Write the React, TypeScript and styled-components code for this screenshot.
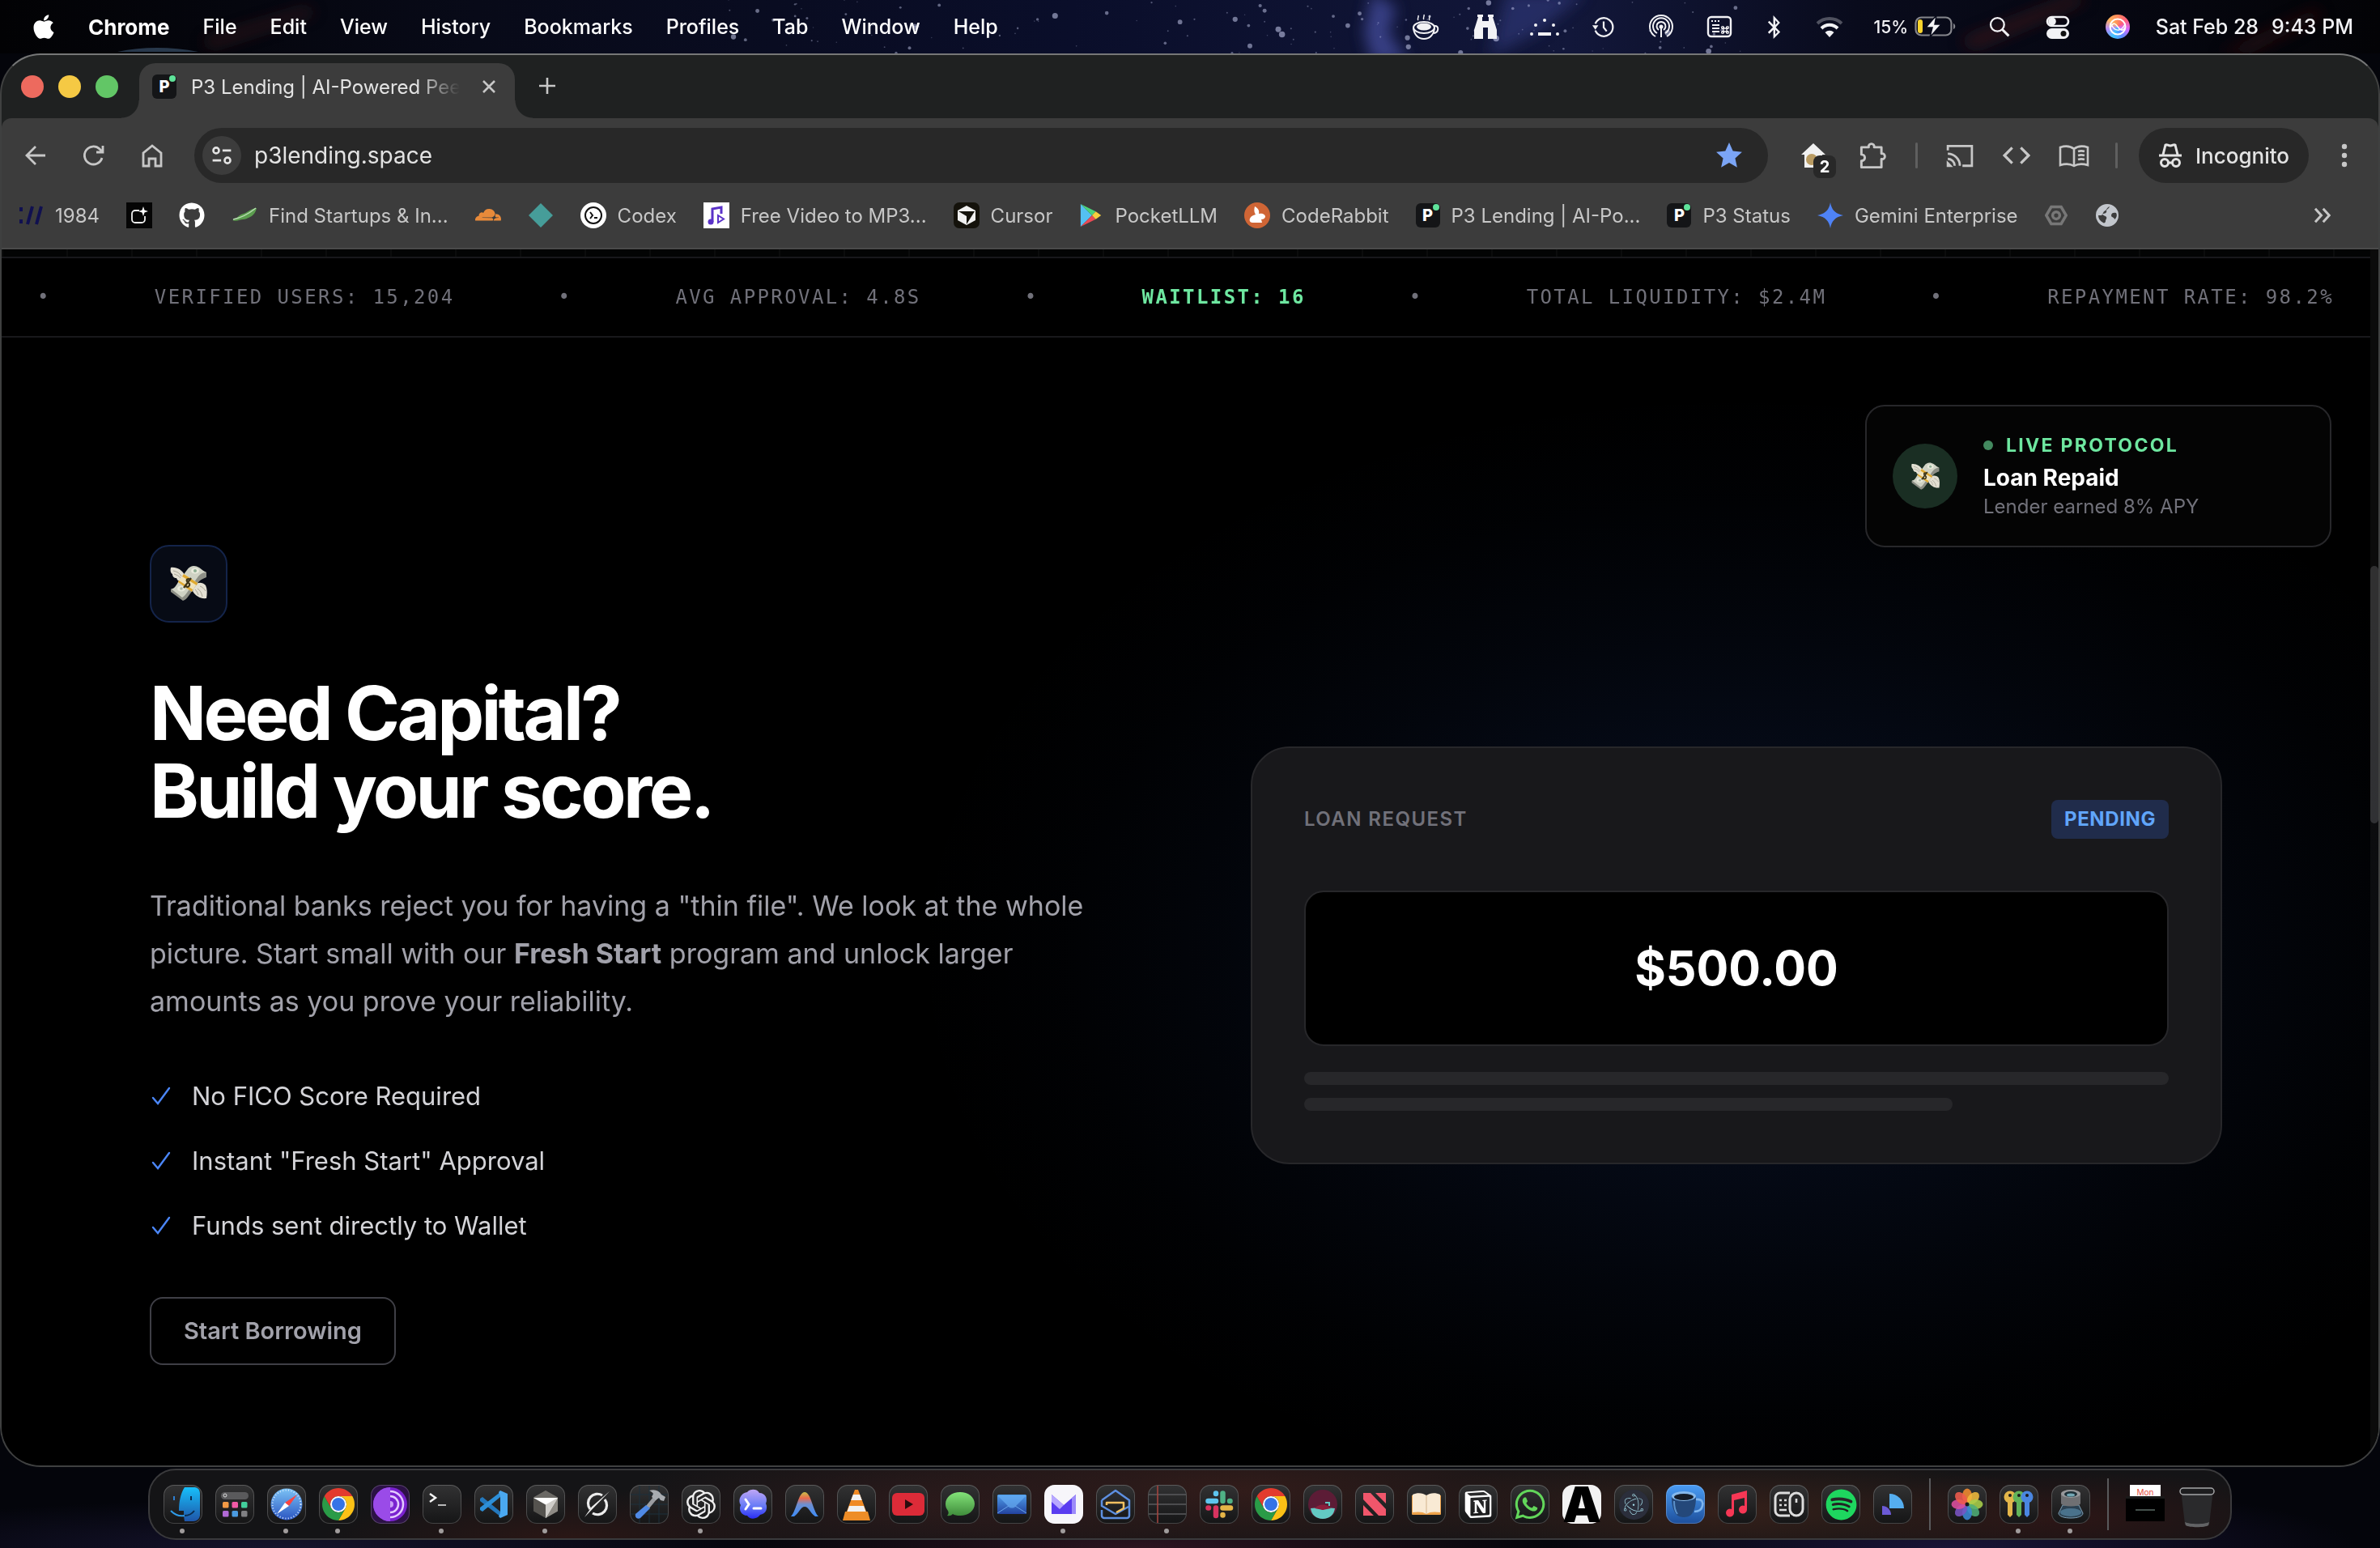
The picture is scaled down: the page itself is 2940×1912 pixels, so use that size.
import React from "react";
import styled, { createGlobalStyle, css } from "styled-components";
import { FaApple, FaGithub, FaSpotify, FaWhatsapp, FaCloudflare, FaBluetoothB } from "react-icons/fa6";
import { SiOpenai, SiNotion, SiElectron } from "react-icons/si";

/* ------------------------------------------------------------------ base */

const sans = `Inter, "Liberation Sans", sans-serif`;
const mono = `"DejaVu Sans Mono", "Liberation Mono", monospace`;

const GlobalStyle = createGlobalStyle`
  *, *::before, *::after { box-sizing: border-box; }
  html, body { margin: 0; background: #04050c; }
  body { font-family: ${sans}; color: #fff; overflow: hidden; }
  button, input { font: inherit; color: inherit; }
  button { cursor: pointer; border: 0; padding: 0; background: none; }
  a { color: inherit; text-decoration: none; }
  h1, p, ul, ol { margin: 0; padding: 0; }
  ul, ol { list-style: none; }
  svg { display: block; flex: none; }
`;

const Desktop = styled.div`
  position: relative;
  isolation: isolate;
  display: flex;
  flex-direction: column;
  min-height: 100vh;
  padding-bottom: 10px;
  background:
    radial-gradient(600px 60px at 12% 100%, #15132c 0%, transparent 100%),
    radial-gradient(500px 60px at 48% 100%, #2c1420 0%, transparent 100%),
    radial-gradient(500px 80px at 82% 100%, #191436 0%, transparent 100%),
    #04050b;
`;

const StarField = styled.svg`
  position: absolute;
  top: 0;
  left: 0;
  width: 100%;
  height: 66px;
  z-index: -1;
`;

/* -------------------------------------------------------------- menu bar */

const MenuBar = styled.header`
  display: flex;
  align-items: center;
  justify-content: space-between;
  height: 66px;
  padding: 0 33px 0 40px;
  font-size: 25px;
  font-weight: 500;
`;

const MenuList = styled.nav`
  display: flex;
  align-items: center;
  gap: 41px;
`;

const AppleMenu = styled.button`
  display: flex;
  justify-content: center;
  width: 28px;
`;

const MenuItem = styled.button<{ $strong?: boolean }>`
  font-size: ${(p) => (p.$strong ? 26 : 25)}px;
  font-weight: ${(p) => (p.$strong ? 700 : 500)};
`;

const StatusList = styled.div`
  display: flex;
  align-items: center;
  gap: 40px;
  color: #f2f2f5;
`;

const StatusCell = styled.button<{ $w: number }>`
  display: flex;
  justify-content: center;
  align-items: center;
  gap: 8px;
  width: ${(p) => p.$w}px;
  font-size: 21px;
  white-space: nowrap;
`;

const SiriOrb = styled.span`
  display: grid;
  place-items: center;
  width: 30px;
  height: 30px;
  border-radius: 50%;
  background: conic-gradient(#ff8a5c, #ff5f7a, #d66bff, #5f8bff, #3fc4ff, #b58cff, #ffb35c, #ff8a5c);
`;

const Clock = styled.time`
  display: flex;
  gap: 16px;
  margin-left: -9px;
  white-space: nowrap;
`;

/* ---------------------------------------------------------------- window */

const Window = styled.section`
  flex: 1;
  display: flex;
  flex-direction: column;
  overflow: hidden;
  border: 2px solid #3f4040;
  border-top-color: #767777;
  border-radius: 50px;
  background: #1f2121;
`;

const TabStrip = styled.div`
  display: flex;
  align-items: flex-end;
  height: 78px;
  padding-left: 24px;
`;

const Lights = styled.div`
  display: flex;
  gap: 18px;
  align-self: center;
`;

const Light = styled.button<{ $c: string }>`
  width: 28px;
  height: 28px;
  border-radius: 50%;
  background: ${(p) => p.$c};
`;

const foot = css`
  content: "";
  position: absolute;
  bottom: 0;
  width: 22px;
  height: 22px;
`;

const Tab = styled.div`
  position: relative;
  display: flex;
  align-items: center;
  gap: 18px;
  width: 464px;
  height: 68px;
  margin-left: 26px;
  padding: 0 14px 10px 16px;
  border-radius: 20px 20px 0 0;
  background: #3c3c3c;
  color: #e3e3e3;
  font-size: 24px;
  &::before { ${foot} left: -22px; background: radial-gradient(circle at 0 0, transparent 21px, #3c3c3c 22px); }
  &::after { ${foot} right: -22px; background: radial-gradient(circle at 100% 0, transparent 21px, #3c3c3c 22px); }
`;

const TabTitle = styled.span`
  flex: 1;
  overflow: hidden;
  white-space: nowrap;
  mask-image: linear-gradient(90deg, #000 84%, transparent 100%);
`;

const IconButton = styled.button`
  display: grid;
  place-items: center;
  width: 36px;
  height: 36px;
  color: #c7c7c7;
`;

const NewTab = styled(IconButton)`
  margin: 0 0 22px 22px;
`;

const Chrome = styled.div`
  display: flex;
  flex-direction: column;
  border-radius: 12px 12px 0 0;
  background: #3c3c3c;
  border-bottom: 2px solid #4a4a4a;
`;

const Toolbar = styled.div`
  display: flex;
  align-items: center;
  gap: 36px;
  padding: 12px 24px 0 24px;
`;

const AddressBar = styled.form`
  flex: 1;
  display: flex;
  align-items: center;
  gap: 16px;
  height: 68px;
  margin: 0 2px 0 -2px;
  padding: 0 30px 0 10px;
  border-radius: 34px;
  background: #282828;
`;

const SiteInfo = styled.button`
  display: grid;
  place-items: center;
  width: 48px;
  height: 48px;
  border-radius: 50%;
  background: #3c3c3c;
  color: #e3e3e3;
`;

const UrlInput = styled.input`
  flex: 1;
  border: 0;
  outline: 0;
  padding: 0;
  background: none;
  color: #e3e3e3;
  font-size: 28px;
`;

const ExtensionButton = styled(IconButton)`
  position: relative;
  margin-right: 4px;
`;

const ExtensionCount = styled.span`
  position: absolute;
  left: 18px;
  top: 18px;
  width: 28px;
  height: 28px;
  border-radius: 8px;
  background: #282828;
  color: #fff;
  font-size: 20px;
  font-weight: 700;
  line-height: 28px;
`;

const Divider = styled.span`
  width: 3px;
  height: 32px;
  border-radius: 2px;
  background: #5f5f5f;
`;

const ToolGroup = styled.div`
  display: flex;
  align-items: center;
  gap: 34px;
`;

const Incognito = styled.button`
  display: flex;
  align-items: center;
  gap: 16px;
  height: 68px;
  padding: 0 24px;
  margin: 0 -8px;
  border-radius: 34px;
  background: #282828;
  color: #e3e3e3;
  font-size: 26px;
  font-weight: 500;
`;

const Bookmarks = styled.nav`
  display: flex;
  align-items: center;
  gap: 33px;
  height: 80px;
  padding: 0 51px 0 20px;
  color: #c7c7c7;
  font-size: 24px;
`;

const Bookmark = styled.a`
  display: flex;
  align-items: center;
  gap: 14px;
  white-space: nowrap;
`;

const MoreBookmarks = styled(IconButton)`
  margin-left: auto;
`;

const P3Tile = styled.span`
  position: relative;
  display: grid;
  place-items: center;
  width: 30px;
  height: 30px;
  border-radius: 6px;
  background: #141517;
  color: #fff;
  font-size: 20px;
  font-weight: 800;
  line-height: 30px;
  &::after {
    content: "";
    position: absolute;
    top: 1px;
    right: 1px;
    width: 8px;
    height: 8px;
    border-radius: 50%;
    background: #5fe39a;
  }
`;

/* ------------------------------------------------------------------ page */

const Viewport = styled.div`
  flex: 1;
  display: grid;
  grid-template-columns: 1fr 10px;
  background: #000;
`;

const Page = styled.main`
  position: relative;
  isolation: isolate;
  min-width: 0;
`;

const GridSliver = styled.div`
  height: 9px;
  background: repeating-linear-gradient(90deg, #0b0c0c 0 2px, #030404 2px 80px);
`;

const Ticker = styled.div`
  display: flex;
  align-items: center;
  gap: 128px;
  height: 100px;
  padding-left: 44px;
  overflow: hidden;
  border: solid #18181b;
  border-width: 2px 0;
  color: #71717a;
  font-family: ${mono};
  font-size: 24px;
  letter-spacing: 2.4px;
  white-space: nowrap;
`;

const TickerValue = styled.span<{ $live?: boolean }>`
  ${(p) => p.$live && css`color: #6ee7a0; font-weight: 700;`}
`;

const Hero = styled.section`
  display: grid;
  grid-template-columns: 1fr 1fr;
  align-items: center;
  gap: 160px;
  max-width: 2560px;
  margin: 0 auto;
  padding: 256px 0 120px;
`;

const Pitch = styled.div`
  display: flex;
  flex-direction: column;
  align-items: flex-start;
  gap: 64px;
`;

const PitchIcon = styled.div`
  display: grid;
  place-items: center;
  width: 96px;
  height: 96px;
  border: 2px solid #14244a;
  border-radius: 24px;
  background: #070b15;
`;

const Title = styled.h1`
  font-size: 92px;
  font-weight: 700;
  line-height: 96px;
  letter-spacing: -0.04em;
`;

const Lead = styled.p`
  color: #a1a1aa;
  font-size: 34px;
  line-height: 59px;
`;

const Perks = styled.ul`
  display: flex;
  flex-direction: column;
  gap: 32px;
`;

const Perk = styled.li`
  display: flex;
  align-items: center;
  gap: 24px;
  color: #d4d4d8;
  font-size: 31px;
  line-height: 48px;
`;

const StartButton = styled.button`
  padding: 20px 40px;
  border: 2px solid #3f3f46;
  border-radius: 16px;
  color: #a1a1aa;
  font-size: 29px;
  font-weight: 600;
  line-height: 40px;
`;

const CardStage = styled.div`
  position: relative;
  &::before {
    content: "";
    position: absolute;
    z-index: -1;
    inset: -440px -420px;
    background: radial-gradient(closest-side, rgba(50, 100, 220, 0.13) 0%, rgba(50, 100, 220, 0.1) 35%, rgba(50, 100, 220, 0.05) 60%, rgba(50, 100, 220, 0.015) 82%, transparent 100%);
  }
`;

const LoanCard = styled.article`
  display: flex;
  flex-direction: column;
  padding: 64px;
  border: 2px solid #27272a;
  border-radius: 48px;
  background: #18181b;
`;

const LoanHead = styled.div`
  display: flex;
  align-items: center;
  justify-content: space-between;
  margin-bottom: 64px;
  color: #71717a;
  font-size: 24px;
  font-weight: 600;
  letter-spacing: 0.06em;
`;

const Badge = styled.span`
  padding: 8px 16px;
  border-radius: 8px;
  background: #202c4b;
  color: #60a5fa;
  font-weight: 700;
  line-height: 32px;
  letter-spacing: 0.025em;
`;

const Amount = styled.div`
  display: grid;
  place-items: center;
  height: 192px;
  margin-bottom: 32px;
  border: 2px solid #27272a;
  border-radius: 24px;
  background: #000;
  font-size: 59px;
  font-weight: 700;
`;

const Skeleton = styled.div<{ $short?: boolean }>`
  width: ${(p) => (p.$short ? "75%" : "100%")};
  height: 16px;
  border-radius: 8px;
  background: #27272a;
  & + & { margin-top: 16px; }
`;

const Toast = styled.aside`
  position: absolute;
  top: 192px;
  right: 48px;
  display: flex;
  align-items: center;
  gap: 32px;
  width: 576px;
  padding: 32px;
  border: 2px solid #27272a;
  border-radius: 24px;
  background: #040404;
`;

const ToastIcon = styled.div`
  display: grid;
  place-items: center;
  width: 80px;
  height: 80px;
  border-radius: 50%;
  background: #1a2e23;
`;

const ToastText = styled.div`
  display: flex;
  flex-direction: column;
  color: #71717a;
  font-size: 24px;
  line-height: 32px;
`;

const LiveLabel = styled.div`
  display: flex;
  align-items: center;
  gap: 16px;
  margin-bottom: 4px;
  color: #6ee7a0;
  font-size: 23px;
  font-weight: 700;
  letter-spacing: 0.1em;
  &::before {
    content: "";
    width: 12px;
    height: 12px;
    border-radius: 50%;
    background: #43895f;
  }
`;

const ToastTitle = styled.strong`
  color: #fff;
  font-size: 28px;
  font-weight: 700;
  line-height: 40px;
`;

const ScrollTrack = styled.div`
  display: grid;
  grid-template-rows: 391fr 318fr 793fr;
  background: #0b0b0b;
`;

const ScrollThumb = styled.div`
  grid-row: 2;
  border-radius: 6px;
  background: #303031;
`;

/* ------------------------------------------------------------------ dock */

const Dock = styled.nav`
  align-self: center;
  display: flex;
  align-items: center;
  gap: 16px;
  height: 88px;
  margin-top: 2px;
  padding: 0 17px;
  border: 2px solid #3a3a3c;
  border-radius: 34px;
  background:
    radial-gradient(300px 60px at 20% 100%, #2a1716 0%, transparent 100%),
    radial-gradient(400px 80px at 38% 50%, #2b1a1b 0%, transparent 100%),
    radial-gradient(500px 90px at 52% 30%, #321c1a 0%, transparent 100%),
    radial-gradient(420px 70px at 76% 60%, #35201a 0%, transparent 100%),
    radial-gradient(300px 60px at 92% 70%, #2c1616 0%, transparent 100%),
    #141416;
`;

const DockItem = styled.button<{ $running?: boolean; $bg?: string; $bare?: boolean }>`
  position: relative;
  display: grid;
  place-items: center;
  width: 48px;
  height: 48px;
  border-radius: 13px;
  ${(p) =>
    !p.$bare &&
    css`
      background: ${p.$bg ?? "linear-gradient(#323233, #151516)"};
      box-shadow: inset 0 0 0 1px rgba(255, 255, 255, 0.2);
    `}
  ${(p) =>
    p.$running &&
    css`
      &::after {
        content: "";
        position: absolute;
        left: 20px;
        top: 54px;
        width: 6px;
        height: 6px;
        border-radius: 50%;
        background: #a09c9c;
      }
    `}
`;

const DockDivider = styled.span`
  display: flex;
  justify-content: center;
  width: 12px;
  &::before {
    content: "";
    width: 2px;
    height: 64px;
    background: #59595b;
  }
`;

/* ----------------------------------------------------------------- icons */

type Draw = { children: React.ReactNode; w?: number; h?: number; box?: string };

const Draw48 = ({ children }: { children: React.ReactNode }) => (
  <svg width="48" height="48" viewBox="0 0 48 48" aria-hidden="true">{children}</svg>
);

const Line = ({ children, w = 32, h = 32, box = "0 0 32 32" }: Draw) => (
  <svg width={w} height={h} viewBox={box} fill="none" stroke="currentColor" strokeWidth="2.6" aria-hidden="true">
    {children}
  </svg>
);

const FlyingMoney = ({ size }: { size: number }) => (
  <svg width={size} height={size} viewBox="0 0 48 48" aria-label="Flying money" role="img">
    <path d="M2 4c7-1 14 3 17 9l-4 8c-3 0-5-1-6-4-3 0-5-2-5-5-2-1-3-4-2-8z" fill="#e3e0d3" />
    <path d="M5 8c5 1 8 3 10 7M6 12c3 1 6 2 8 5" stroke="#a8a596" fill="none" />
    <path d="M46 42c-7 1-14-3-17-9l3-8c4-3 9-3 13 1 2 4 2 10 1 16z" fill="#e3e0d3" />
    <path d="M41 40c-1-5-3-8-6-10M36 38c-1-3-2-5-4-7M45 33c-2-3-4-5-7-6" stroke="#a8a596" fill="none" />
    <path d="M2 31c4 1 6-3 9-8L22 8c4-6 10-6 15-3 4 3 7 4 9 5v6c-5 2-8 3-12 9L24 39c-2 3-4 5-7 6L2 34z" fill="#8d8f86" />
    <path d="M2 30c4 1 6-3 9-8L22 7c4-6 10-6 15-3 4 3 6 5 9 6-6 0-9 3-13 9L22 35c-2 3-4 5-6 6z" fill="#cfd2c4" />
    <ellipse cx="32" cy="8" rx="5" ry="3.6" fill="#e9eadc" />
    <circle cx="32" cy="8" r="2" fill="#8fae94" />
    <ellipse cx="15" cy="30" rx="5" ry="3.6" fill="#e9eadc" />
    <circle cx="15" cy="30" r="1.8" fill="#a9b8a8" />
    <path d="M18 12l17 11-7 11-17-12z" fill="#efe3bd" />
    <path d="M18 12l17 11-1 3-18-11zM12 20l17 11-1 3-17-12z" fill="#e0a92f" />
    <path d="M26 19c-3-2-5 0-4 2s4 2 3 5-4 2-6 0M27 17l-9 12" stroke="#3c3418" strokeWidth="2.2" fill="none" />
  </svg>
);

const ChromeLogo = () => {
  const blade = "M24 14 41.32 14A20 20 0 0 0 6.68 14L15.34 29A10 10 0 0 1 24 14Z";
  return (
    <Draw48>
      <path d={blade} fill="#fbc116" transform="rotate(120 24 24)" />
      <path d={blade} fill="#2a9b47" transform="rotate(240 24 24)" />
      <path d={blade} fill="#e33b2e" />
      <circle cx="24" cy="24" r="10" fill="#fff" />
      <circle cx="24" cy="24" r="8" fill="#3573e6" />
    </Draw48>
  );
};

const CursorCube = () => (
  <Draw48>
    <path d="M24 7 39 15.500V32.500L24 41 9 32.500V15.500Z" fill="#55534f" />
    <path d="M24 7 39 15.500 24 24 9 15.500Z" fill="#6b6965" />
    <path d="M39 15.500V32.500L24 41V24Z" fill="#8f8c86" />
    <path d="M9 16H39L24 41V24.500Z" fill="#fff" />
    <path d="M39 16 24 41V24.500Z" fill="#cfcdc9" />
  </Draw48>
);

const Vscode = () => (
  <Draw48>
    <path d="M7 17l3-2 22 18v6L7 20z" fill="#2478bd" />
    <path d="M7 31l3 2 22-18V9L7 28z" fill="#2d8fd8" />
    <path d="M32 7l9 4v26l-9 4-2-2 2-4V14l-2-5z" fill="#4aa8f0" />
  </Draw48>
);

const Finder = () => (
  <Draw48>
    <defs>
      <linearGradient id="finder" x2="0" y2="1"><stop stopColor="#17c0fb" /><stop offset="1" stopColor="#1f55a8" /></linearGradient>
    </defs>
    <path d="M26 3h13a7 7 0 0 1 6 7v28a8 8 0 0 1-8 7H26c-1-5-1-9-1-13h-6c0-11 2-21 7-29z" fill="url(#finder)" />
    <path d="M13 14v5" stroke="#2f7ed0" strokeWidth="2" />
    <path d="M34 14v5" stroke="#0b2c4e" strokeWidth="2" />
    <path d="M9 32c6 6 12 7 17 6" stroke="#2f9be8" strokeWidth="2" fill="none" />
    <path d="M26 38c5 0 9-2 12-6" stroke="#0b2c4e" strokeWidth="2" fill="none" />
  </Draw48>
);

const Launchpad = () => (
  <Draw48>
    <rect x="7" y="9" width="34" height="9" rx="4.500" fill="#5a5a5c" />
    <circle cx="12" cy="13" r="2" fill="none" stroke="#ddd" />
    {["#f39a45", "#f35aa6", "#42cf9c", "#b16ad6", "#4b9be0", "#808083"].map((c, i) => (
      <rect key={c} x={9 + (i % 3) * 11.500} y={i < 3 ? 21 : 32} width="7.500" height="7.500" rx="1.500" fill={c} />
    ))}
  </Draw48>
);

const Safari = () => (
  <Draw48>
    <defs>
      <linearGradient id="safari" x2="0" y2="1"><stop stopColor="#7cc3f5" /><stop offset="1" stopColor="#2b55c2" /></linearGradient>
    </defs>
    <circle cx="24" cy="24" r="19.500" fill="url(#safari)" />
    <circle cx="24" cy="24" r="17.500" fill="none" stroke="#d7eaff" strokeWidth="2" strokeDasharray="1 2.500" />
    <path d="M37 12 27 26 22 22Z" fill="#fb4340" />
    <path d="M12 36 27 26 22 22Z" fill="#fff" />
  </Draw48>
);

const Tor = () => (
  <Draw48>
    <circle cx="24" cy="24" r="21" fill="#7a22d0" />
    <path d="M24 3a21 21 0 0 0 0 42z" fill="#9a4be8" />
    <path d="M24 8a16 16 0 0 1 0 32M24 14a10 10 0 0 1 0 20" stroke="#e4cbff" strokeWidth="2.500" fill="none" />
    <path d="M24 20a4 4 0 0 1 0 8z" fill="#c79bf5" />
  </Draw48>
);

const Terminal = () => (
  <Draw48>
    <path d="M9 11l7 5-7 5" stroke="#f4f4f4" strokeWidth="2.500" fill="none" />
    <path d="M19 25h10" stroke="#b8b8b8" strokeWidth="2" />
  </Draw48>
);

const Grok = () => (
  <Draw48>
    <path d="M30 13a11.500 11.500 0 0 0-15 17M18 35a11.500 11.500 0 0 0 15-17" stroke="#ececec" strokeWidth="3.200" fill="none" />
    <path d="M39 8 8 40l9-13z" fill="#ececec" />
  </Draw48>
);

const Xcode = () => (
  <Draw48>
    <path d="M1 12h46M1 24h46M1 36h46M12 1v46M24 1v46M36 1v46" stroke="#1c303d" strokeWidth="1" />
    <path d="M29 15 33 18 24 29 20 26Z" fill="#9a9da1" />
    <path d="M20 25 25 29 13 41c-4 2-7-1-6-5z" fill="#4f8ae6" />
    <path d="M24 7c7-2 12 0 15 5l5 3-2 5-4-1-2-3-4 3-5-4 2-4c-1-2-3-3-5-4z" fill="#a9acb0" />
  </Draw48>
);

const Codex = () => (
  <Draw48>
    <defs>
      <linearGradient id="codex" x2="0" y2="1"><stop stopColor="#c0a6f5" /><stop offset=".55" stopColor="#6a7df7" /><stop offset="1" stopColor="#2a2df5" /></linearGradient>
    </defs>
    <path d="M17 9c4-5 13-4 15 1 7 0 11 7 8 13 3 6 0 13-7 14-4 6-13 6-16 1-7 0-11-7-8-13-4-6 0-15 8-16z" fill="url(#codex)" />
    <path d="M15 18l4 6-4 6M25 29h9" stroke="#fff" strokeWidth="3" fill="none" strokeLinecap="round" />
  </Draw48>
);

const RainbowArch = () => (
  <Draw48>
    <defs>
      <linearGradient id="arch" x2="0" y2="1"><stop stopColor="#c7c04a" /><stop offset=".25" stopColor="#ea6a4c" /><stop offset=".5" stopColor="#6f8fd0" /><stop offset="1" stopColor="#3e8cf7" /></linearGradient>
    </defs>
    <path d="M7 39C14 32 16 9 24 9s10 23 17 30h-4c-6-4-8-12-13-12s-7 8-13 12z" fill="url(#arch)" />
  </Draw48>
);

const Vlc = () => (
  <Draw48>
    <path d="M22 6h4l12 32H10z" fill="#f08a24" />
    <path d="M19.800 12h8.400l2.600 7H17.200zM15 26h18l2.500 7h-23z" fill="#f1f1f1" />
    <path d="M10 33h28l3 11H7z" fill="#ee8d27" />
  </Draw48>
);

const Youtube = () => (
  <Draw48>
    <rect x="4" y="10" width="40" height="28" rx="6" fill="#dc2b38" />
    <path d="M20 18l10 6-10 6z" fill="#2b0c0e" />
  </Draw48>
);

const Messages = () => (
  <Draw48>
    <defs>
      <linearGradient id="msg" x2="0" y2="1"><stop stopColor="#83e379" /><stop offset="1" stopColor="#3f8c3b" /></linearGradient>
    </defs>
    <path d="M24 9c10 0 18 6 18 14.500S34 38 24 38c-4 0-7-.6-9-2-2 2-4 2.500-7 2 2-2 2-4 1-6-2-2.500-3-5-3-8.500C6 15 14 9 24 9z" fill="url(#msg)" />
  </Draw48>
);

const Mail = () => (
  <Draw48>
    <defs>
      <linearGradient id="mail" x2="0" y2="1"><stop stopColor="#4f9eea" /><stop offset="1" stopColor="#2343a0" /></linearGradient>
    </defs>
    <rect x="6" y="12" width="36" height="24" rx="1.500" fill="url(#mail)" />
    <path d="M6 13h36L28 27c-2 2-6 2-8 0z" fill="#67adf2" opacity=".7" />
    <path d="M6 35l14-9M42 35l-14-9" stroke="#6ba6ea" strokeWidth="1" fill="none" />
  </Draw48>
);

const Proton = () => (
  <Draw48>
    <path d="M9 12l15 13 15-13v24H9z" fill="#5a3df0" />
    <path d="M9 12l15 13-5 5-10-9z" fill="#b8a8ff" />
    <path d="M34 16l5-4v24h-5z" fill="#9d8bfa" />
  </Draw48>
);

const HomeMail = () => (
  <Draw48>
    <path d="M7 19 24 7 41 19V38a3 3 0 0 1-3 3H10a3 3 0 0 1-3-3V31M7 19v7l17 10 16-9" stroke="#5d8fe0" strokeWidth="2.500" fill="none" strokeLinejoin="round" />
    <path d="M13 25v-3h21v7l-9 5" stroke="#f2c061" strokeWidth="2.500" fill="none" strokeLinejoin="round" />
  </Draw48>
);

const Lined = () => (
  <Draw48>
    <path d="M1 12h46M1 24h46M1 36h46" stroke="#5a5a5c" strokeWidth="1.600" />
    <path d="M12 1v46" stroke="#a3443f" strokeWidth="1.600" />
  </Draw48>
);

const SlackMark = () => (
  <Draw48>
    <g strokeWidth="6.500" strokeLinecap="round">
      <path d="M10.500 20H20" stroke="#5ec5ee" />
      <path d="M20 10.500V11" stroke="#5ec5ee" />
      <path d="M28.500 10.500V20" stroke="#4fb185" />
      <path d="M37 20h.5" stroke="#4fb185" />
      <path d="M28.500 28.500H38" stroke="#e6b547" />
      <path d="M28.500 37v.5" stroke="#e6b547" />
      <path d="M20 28.500V38" stroke="#d8335f" />
      <path d="M10.500 28.500H11" stroke="#d8335f" />
    </g>
  </Draw48>
);

const Bowl = () => (
  <Draw48>
    <circle cx="24" cy="24" r="18" fill="#5c1c36" />
    <path d="M9 29c5-1 11-1 15 2 4-3 10-3 15-2-1 8-7 13-15 13S10 37 9 29z" fill="#63c9c3" />
    <path d="M14 29c5-6 15-6 20 0l-10 2z" fill="#8c1f3c" />
    <path d="M27 22h5v4" stroke="#63c9c3" strokeWidth="2" fill="none" />
  </Draw48>
);

const News = () => (
  <Draw48>
    <path d="M10 10h9l19 20v8h-9L10 18zM25 10h13v13zM10 25v13h13z" fill="#f0566b" />
  </Draw48>
);

const Books = () => (
  <Draw48>
    <path d="M6 13h36v23a1 1 0 0 1-1 1H7a1 1 0 0 1-1-1z" fill="#eda24a" />
    <path d="M7 12c6-3 13-2 17 1 4-3 11-4 17-1v22c-6-1-13-1-17 2-4-3-11-3-17-2z" fill="#f9ead4" />
    <path d="M24 13v23" stroke="#d8bd98" strokeWidth="1.200" />
  </Draw48>
);

const LetterA = styled.span`
  font-size: 60px;
  font-weight: 900;
  line-height: 48px;
  color: #000;
`;

const Disc = styled.span`
  display: grid;
  place-items: center;
  width: 37px;
  height: 37px;
  border-radius: 50%;
  background: #2b2e3b;
`;

const Mug = () => (
  <Draw48>
    <path d="M37 18c8-1 9 4 8 8-1 5-5 7-10 7" stroke="#7db4ee" strokeWidth="2.600" fill="none" />
    <path d="M7 14c0 9 1 17 6 23 4 4 14 4 18 0 5-6 6-14 6-23z" fill="#24487a" />
    <ellipse cx="22" cy="14" rx="15" ry="6" fill="#86b9ec" />
    <ellipse cx="22" cy="15" rx="12" ry="4" fill="#151d29" />
    <path d="M10 20c0 7 1 12 4 16" stroke="#5c92cc" strokeWidth="2" fill="none" />
  </Draw48>
);

const Music = () => (
  <Draw48>
    <path d="M17 12 36 7v24a5 5 0 1 1-3-5V16l-13 3v16a5 5 0 1 1-3-5z" fill="#f73755" />
  </Draw48>
);

const Mirroring = () => (
  <Draw48>
    <path d="M25 10h-12a6 6 0 0 0-6 6v16a6 6 0 0 0 6 6h12" stroke="#dcdcdc" strokeWidth="3" fill="none" />
    <rect x="25" y="10" width="16" height="28" rx="8" stroke="#dcdcdc" strokeWidth="3" fill="none" />
    <path d="M33 17v5M12 19h3M18 19h3M12 25h3M18 25h3M12 31h9" stroke="#dcdcdc" strokeWidth="2.600" />
  </Draw48>
);

const Quadrants = () => (
  <Draw48>
    <path d="M20 11a18 18 0 0 1 18 18H20z" fill="#55aef0" />
    <path d="M11 26a11 11 0 0 1 11 11H11z" fill="#6c5ad6" />
  </Draw48>
);

const Photos = () => (
  <Draw48>
    {["#f28b30", "#f0b93c", "#a9cf4b", "#4fae77", "#3b87d6", "#7a54c4", "#dd4e9e", "#ef5b4d"].map((c, i) => (
      <ellipse key={c} cx="24" cy="13.500" rx="6" ry="9" fill={c} opacity=".88" transform={`rotate(${i * 45} 24 24)`} />
    ))}
    <circle cx="24" cy="24" r="2.500" fill="#1b1b1b" />
  </Draw48>
);

const keyBlades: { colour: string; x: number }[] = [
  { colour: "#e3b64a", x: 13 },
  { colour: "#62b45a", x: 24 },
  { colour: "#4a86e0", x: 34 },
];

const Keys = () => (
  <Draw48>
    {keyBlades.map(({ colour, x }) => (
      <g key={colour} fill={colour}>
        <circle cx={x} cy="15" r="7.500" />
        <path d={`M${x - 3} 20h6v17l-3 3-3-3z`} />
        <circle cx={x} cy="13" r="2" fill="#1c1c1c" />
      </g>
    ))}
  </Draw48>
);

const Lens = () => (
  <Draw48>
    <path d="M14 25h20l5 10c0 4-7 6-15 6S9 39 9 35z" fill="#2c4252" stroke="#7fa1b8" />
    <ellipse cx="24" cy="34" rx="13" ry="5" fill="#5f93b4" opacity=".6" />
    <path d="M12 12h24v11H12z" fill="#6f7073" />
    <ellipse cx="24" cy="23" rx="12" ry="3.500" fill="#6f7073" />
    <ellipse cx="24" cy="11" rx="12" ry="5" fill="#97989b" />
    <ellipse cx="24" cy="11.500" rx="8" ry="3.500" fill="#1d3038" />
    <ellipse cx="24" cy="12.500" rx="5" ry="2" fill="#73a7b5" />
  </Draw48>
);

const Tray = styled.span`
  display: flex;
  flex-direction: column;
  align-items: center;
  width: 48px;
  margin-bottom: 10px;
`;

const TrayPaper = styled.span`
  width: 38px;
  height: 14px;
  background: #fff;
  color: #e8503f;
  font-size: 10px;
  line-height: 18px;
`;

const TrayBox = styled.span`
  display: grid;
  place-items: center;
  width: 48px;
  height: 31px;
  border-top: 3px solid #1a1a1a;
  background: #000;
  &::after { content: ""; width: 24px; height: 2px; background: #44504c; }
`;

const Trash = () => (
  <svg width="48" height="56" viewBox="0 0 48 56" aria-hidden="true">
    <path d="M4 6 9 49c1 3 29 3 30 0L44 6z" fill="#2a2a2c" />
    <path d="M9 46c6 3 24 3 30 0l-1 4c-4 3-24 3-28 0z" fill="#626365" />
    <rect x="3" y="4" width="42" height="8" rx="4" fill="#1d1d1f" stroke="#a5a6a8" strokeWidth="1.500" />
  </svg>
);

/* ------------------------------------------------------------------ data */

const menus = ["File", "Edit", "View", "History", "Bookmarks", "Profiles", "Tab", "Window", "Help"];

const P3Icon = () => <P3Tile>P</P3Tile>;

const bookmarks: { label?: string; name: string; icon: React.ReactNode }[] = [
  {
    name: "1984", label: "1984",
    icon: <Line><path d="M4 6v5M4 21v5" stroke="#101050" strokeWidth="4" /><path d="M12 27 18 5M23 27 29 5" stroke="#101050" strokeWidth="4" /></Line>,
  },
  {
    name: "Capture",
    icon: <Line><rect width="32" height="32" fill="#050505" stroke="none" /><path d="M16 10h-5a4 4 0 0 0-4 4v7a4 4 0 0 0 4 4h8a4 4 0 0 0 4-4v-4" stroke="#eee" strokeWidth="1.800" /><path d="M21 5l1.500 4.500L27 11l-4.500 1.500L21 17l-1.500-4.500L15 11l4.500-1.500z" fill="#fff" stroke="none" /></Line>,
  },
  { name: "GitHub", icon: <FaGithub size={32} color="#fff" /> },
  {
    name: "Find Startups", label: "Find Startups & In...",
    icon: <Line><path d="M1 22c4-1 6-4 9-6s6-2 9-4 8-5 12-5c-1 5-4 9-8 11s-6 3-9 3-8 3-13 1z" fill="#5b9d4e" stroke="none" /><path d="M2 21c10-2 18-6 28-14" stroke="#b9dcb3" strokeWidth="1.500" /></Line>,
  },
  { name: "Cloudflare", icon: <FaCloudflare size={32} color="#e88a3a" /> },
  { name: "Diamond", icon: <Line><path d="M16 1 31 16 16 31 1 16z" fill="#469d99" stroke="none" /></Line> },
  {
    name: "Codex", label: "Codex",
    icon: <Line><circle cx="16" cy="16" r="16" fill="#fff" stroke="none" /><circle cx="16" cy="16" r="10" stroke="#111" strokeWidth="2" /><path d="M12 12l3 4-3 4M17 19h4" stroke="#111" strokeWidth="2" /></Line>,
  },
  {
    name: "Free Video to MP3", label: "Free Video to MP3...",
    icon: <Line><rect width="32" height="32" fill="#fff" stroke="none" /><path d="M11 24V8l11-2v8" stroke="#5a32c8" strokeWidth="3" /><circle cx="9" cy="24" r="3.500" fill="#5a32c8" stroke="none" /><path d="M18 16l7 4.500-7 4.500z" stroke="#5a32c8" strokeWidth="2" /></Line>,
  },
  {
    name: "Cursor", label: "Cursor",
    icon: <Line><rect width="32" height="32" rx="7" fill="#14120b" stroke="none" /><path d="M16 4 27 10V22L16 28 5 22V10Z" fill="#f0f0f0" stroke="none" /><path d="M6 11H26L16 27V17Z" fill="#14120b" stroke="none" /></Line>,
  },
  {
    name: "PocketLLM", label: "PocketLLM",
    icon: <Line w={30}><path d="M2 1v30l15-15z" fill="#54c0f2" stroke="none" /><path d="M2 1l15 15 5-5z" fill="#4bd37b" stroke="none" /><path d="M2 31l15-15 5 5z" fill="#ea4a55" stroke="none" /><path d="M22 11l7 5-7 5-5-5z" fill="#f7cf3e" stroke="none" /></Line>,
  },
  {
    name: "CodeRabbit", label: "CodeRabbit",
    icon: <Line><circle cx="16" cy="16" r="16" fill="#cf6535" stroke="none" /><path d="M13 5c4 2 6 5 5 9 5-1 8 1 8 4-1 2-2 3-5 3l1 4H10c-3 0-4-3-3-5 1-3 4-4 7-5-2-3-2-6-1-10z" fill="#fff" stroke="none" /></Line>,
  },
  { name: "P3 Lending", label: "P3 Lending | AI-Po...", icon: <P3Icon /> },
  { name: "P3 Status", label: "P3 Status", icon: <P3Icon /> },
  {
    name: "Gemini Enterprise", label: "Gemini Enterprise",
    icon: <Line><path d="M16 0c1.500 9 6 14 16 16-10 2-14.500 7-16 16-1.500-9-6-14-16-16C10 14 14.500 9 16 0z" fill="#4f83f6" stroke="none" /></Line>,
  },
  { name: "Hex", icon: <Line w={28} h={28}><path d="M9 4h14l7 12-7 12H9L2 16z" stroke="#777" strokeWidth="4" /><circle cx="16" cy="16" r="5" stroke="#777" strokeWidth="4" /></Line> },
  {
    name: "Globe",
    icon: <Line><circle cx="16" cy="16" r="14" fill="#c2c6cc" stroke="none" /><path d="M19 5c-1 3-3 3-4 5 1 3-2 4-5 4 0 2 3 2 5 4 1 2-1 3-1 5s-2 3-3 2c-4-2-6-5-6-9h4c2-2 2-5 5-6 2-2 2-4 5-5zM27 13c-3-1-6 0-6 3s4 2 4 5c2-1 4-5 2-8z" fill="#3c3c3c" stroke="none" /></Line>,
  },
];

const ticker = ["VERIFIED USERS: 15,204", "AVG APPROVAL: 4.8S", "WAITLIST: 16", "TOTAL LIQUIDITY: $2.4M", "REPAYMENT RATE: 98.2%"];

const perks = ["No FICO Score Required", `Instant "Fresh Start" Approval`, "Funds sent directly to Wallet"];

type DockApp = { name: string; icon: React.ReactNode; running?: boolean; bg?: string };

const apps: DockApp[] = [
  { name: "Finder", icon: <Finder />, running: true },
  { name: "Apps", icon: <Launchpad /> },
  { name: "Safari", icon: <Safari />, running: true },
  { name: "Chrome", icon: <ChromeLogo />, running: true },
  { name: "Tor Browser", icon: <Tor />, bg: "#2c1245" },
  { name: "Terminal", icon: <Terminal />, running: true },
  { name: "Code", icon: <Vscode /> },
  { name: "Cursor", icon: <CursorCube />, running: true },
  { name: "Grok", icon: <Grok /> },
  { name: "Xcode", icon: <Xcode /> },
  { name: "ChatGPT", icon: <SiOpenai size={36} color="#efefef" />, running: true },
  { name: "Codex", icon: <Codex /> },
  { name: "Arch", icon: <RainbowArch /> },
  { name: "VLC", icon: <Vlc /> },
  { name: "YouTube", icon: <Youtube /> },
  { name: "Messages", icon: <Messages /> },
  { name: "Mail", icon: <Mail /> },
  { name: "Proton Mail", icon: <Proton />, running: true, bg: "#f7f6fa" },
  { name: "Home Mail", icon: <HomeMail /> },
  { name: "Notes", icon: <Lined />, running: true },
  { name: "Slack", icon: <SlackMark /> },
  { name: "Chrome Beta", icon: <ChromeLogo /> },
  { name: "Bowl", icon: <Bowl /> },
  { name: "News", icon: <News /> },
  { name: "Books", icon: <Books /> },
  { name: "Notion", icon: <SiNotion size={34} color="#fff" /> },
  { name: "WhatsApp", icon: <FaWhatsapp size={42} color="#62d65a" /> },
  { name: "Font Editor", icon: <LetterA>A</LetterA>, bg: "#f2f2f2" },
  { name: "Electron", icon: <Disc><SiElectron size={26} color="#a5ddea" /></Disc> },
  { name: "Mug", icon: <Mug />, bg: "linear-gradient(#4a9df5, #1d4f9c)" },
  { name: "Music", icon: <Music /> },
  { name: "iPhone Mirroring", icon: <Mirroring /> },
  { name: "Spotify", icon: <FaSpotify size={39} color="#1ed75f" /> },
  { name: "Quadrants", icon: <Quadrants /> },
];

const recents: DockApp[] = [
  { name: "Photos", icon: <Photos /> },
  { name: "Passwords", icon: <Keys />, running: true },
  { name: "Preview", icon: <Lens />, running: true },
];

/* Deterministic scatter so the sky is the same on every load. */
const stars = Array.from({ length: 130 }, (_, i) => {
  const a = Math.abs(Math.sin(i * 12.9898) * 43758.5453) % 1;
  const b = Math.abs(Math.sin(i * 78.233) * 12543.123) % 1;
  const c = Math.abs(Math.sin(i * 39.425) * 9871.77) % 1;
  return { x: 900 + a * 1250, y: b * 66, r: 0.8 + c * c * c * 3, o: 0.2 + c * 0.35 };
});

/* ------------------------------------------------------------ components */

const Sky = () => (
  <StarField viewBox="0 0 2940 66" preserveAspectRatio="none" aria-hidden="true">
    <defs>
      <linearGradient id="sky">
        <stop stopColor="#020204" />
        <stop offset=".2" stopColor="#080a18" />
        <stop offset=".45" stopColor="#0a0e2a" />
        <stop offset=".66" stopColor="#12173a" />
        <stop offset=".78" stopColor="#090b1c" />
        <stop offset="1" stopColor="#030306" />
      </linearGradient>
      <filter id="haze" x="-50%" y="-50%" width="200%" height="200%"><feGaussianBlur stdDeviation="9" /></filter>
    </defs>
    <rect width="2940" height="66" fill="url(#sky)" />
    <g filter="url(#haze)">
      <path d="M1695-10 1725 10 1715 40 1740 76 1695 76 1685 40z" fill="#4a52a6" opacity=".7" />
      <path d="M1860-10 1960-10 1900 40 1840 70z" fill="#39408e" opacity=".5" />
      <path d="M250 50 380 10 390 16 260 58z" fill="#5a2a28" opacity=".5" />
      <path d="M2420 50 2560-5 2580 0 2440 60z" fill="#4a1c1a" opacity=".6" />
      <path d="M2740 66 2860 10 2870 20 2780 66z" fill="#4a1c1a" opacity=".4" />
    </g>
    <path d="M145 64q48-10 100 0z" fill="#32465c" opacity=".8" />
    {stars.map((s, i) => <circle key={i} cx={s.x} cy={s.y} r={s.r} fill="#cfd4f5" opacity={s.o} />)}
  </StarField>
);

const StatusIcons = () => (
  <StatusList>
    <StatusCell $w={36} aria-label="Caffeine">
      <Line w={36} box="0 0 36 32">
        <ellipse cx="15" cy="17" rx="13" ry="7" strokeWidth="2" /><ellipse cx="15" cy="16" rx="9" ry="4.500" fill="currentColor" stroke="none" />
        <path d="M2 18c1 8 6 13 13 13s12-5 13-13M28 15c6-1 6 9-2 9" strokeWidth="2" /><path d="M8 8c-2-2 1-3 0-6M15 7c-2-2 1-3 0-6M22 8c-2-2 1-3 0-6" strokeWidth="1.500" />
      </Line>
    </StatusCell>
    <StatusCell $w={30} aria-label="Binoculars">
      <Line w={30} box="0 0 30 32"><path d="M5 1h7v3h-1v5h8V4h-1V1h7v3h-1l5 16v11H18V17h-6v14H1V20L6 4H5z" fill="currentColor" stroke="none" /></Line>
    </StatusCell>
    <StatusCell $w={36} aria-label="Dots">
      <Line w={36} box="0 0 36 32"><path d="M10 25h16" strokeWidth="4" /><g fill="currentColor" stroke="none"><circle cx="2" cy="25" r="2" /><circle cx="34" cy="25" r="2" /><circle cx="7" cy="14" r="2" /><circle cx="29" cy="14" r="2" /><circle cx="18" cy="8" r="2" /></g></Line>
    </StatusCell>
    <StatusCell $w={30} aria-label="Time Machine">
      <Line w={30}><path d="M5 12a12 12 0 1 1 0 9" strokeWidth="2.400" /><path d="M16 9v8l4 5" strokeWidth="2.400" /><path d="M1 14h8l-4 6z" fill="currentColor" stroke="none" /></Line>
    </StatusCell>
    <StatusCell $w={32} aria-label="AirDrop">
      <Line><g strokeWidth="2"><path d="M9 28a14 14 0 1 1 14 0M11 24a10 10 0 1 1 10 0M13 20a5.500 5.500 0 1 1 6 0" /></g><circle cx="16" cy="16" r="2.500" fill="currentColor" stroke="none" /><path d="M16 18v11" strokeWidth="2" /></Line>
    </StatusCell>
    <StatusCell $w={32} aria-label="Keyboard shortcuts">
      <Line>
        <rect x="2" y="4" width="28" height="24" rx="4" strokeWidth="2.400" />
        <path d="M6 9h2M10 9h2M14 9h2M7 14h9M7 18h9M7 22h9" strokeWidth="2" />
        <path d="M21 16v8M25 16v8M19 18h8M19 22h8" strokeWidth="1.300" />
        <g strokeWidth="1.200"><circle cx="20" cy="17" r="1.500" /><circle cx="26" cy="17" r="1.500" /><circle cx="20" cy="23" r="1.500" /><circle cx="26" cy="23" r="1.500" /></g>
      </Line>
    </StatusCell>
    <StatusCell $w={24} aria-label="Bluetooth"><FaBluetoothB size={29} /></StatusCell>
    <StatusCell $w={32} aria-label="Wi-Fi">
      <svg width="34" height="28" viewBox="0 0 34 28" fill="none" stroke="currentColor" strokeWidth="4"><path d="M2 10a22 22 0 0 1 30 0" opacity=".3" /><path d="M7 16a14 14 0 0 1 20 0" /><path d="M17 27l-5.500-6a8 8 0 0 1 11 0z" fill="currentColor" stroke="none" /></svg>
    </StatusCell>
    <StatusCell $w={100} aria-label="Battery 15%">
      15%
      <svg width="52" height="28" viewBox="0 0 52 28" fill="none">
        <rect x="1.500" y="2.500" width="44" height="22" rx="7" stroke="#85868c" strokeWidth="2.200" />
        <path d="M48 10c3 1 3 6 0 7z" fill="#85868c" /><rect x="4" y="5" width="6" height="17" rx="3" fill="#f8d32d" />
        <path d="M27 0 14 15h8l-3 12 14-16h-8z" fill="#f4f4f6" stroke="#0a0c1c" strokeWidth="1.500" />
      </svg>
    </StatusCell>
    <StatusCell $w={28} aria-label="Spotlight"><Line w={28}><circle cx="13" cy="13" r="9.500" /><path d="M20 20l9 9" strokeWidth="3.500" /></Line></StatusCell>
    <StatusCell $w={36} aria-label="Control Center">
      <Line><rect x="3" y="4" width="26" height="11" rx="5.500" /><circle cx="9" cy="9.500" r="3.500" fill="currentColor" /><rect x="2" y="18" width="28" height="13" rx="6.500" fill="currentColor" stroke="none" /><circle cx="23" cy="24.500" r="3.500" fill="#111" stroke="none" /></Line>
    </StatusCell>
    <StatusCell $w={32} aria-label="Siri">
      <SiriOrb><svg width="24" height="24" viewBox="0 0 24 24" fill="none" stroke="#fff" strokeWidth="2"><circle cx="12" cy="12" r="9.500" /><path d="M3 13c4-8 7-4 9-1s6 7 9 1M4 9c4 9 12 10 17 0" strokeWidth="1.500" /></svg></SiriOrb>
    </StatusCell>
    <Clock><span>Sat Feb 28</span><span>9:43 PM</span></Clock>
  </StatusList>
);

const BrowserTools = () => (
  <ToolGroup>
    <ExtensionButton aria-label="Extension">
      <Line><path d="M16 1 31 15h-4v16H5V15H1z" fill="#f1f1f1" stroke="none" /><circle cx="14" cy="21" r="7" fill="#b99b62" stroke="none" /></Line>
      <ExtensionCount>2</ExtensionCount>
    </ExtensionButton>
    <IconButton aria-label="Extensions">
      <Line w={36} h={36} box="0 0 32 32"><path d="M3 7h8c-1-5 7-5 6 0h8v7c5-1 5 7 0 6v9H3v-7c5 0 5-7 0-7z" strokeLinejoin="round" /></Line>
    </IconButton>
    <Divider />
    <IconButton aria-label="Cast">
      <Line w={34} h={34}><path d="M2 10V5h28v23H19" /><path d="M2 14a14 14 0 0 1 14 14M2 20a8 8 0 0 1 8 8" /><path d="M2 25l3 3H2z" fill="currentColor" /></Line>
    </IconButton>
    <IconButton aria-label="Developer tools"><Line w={34} h={34}><path d="M11 7 2 16l9 9M21 7l9 9-9 9" strokeWidth="3" /></Line></IconButton>
    <IconButton aria-label="Reading mode">
      <Line w={38} h={32} box="0 0 38 32"><path d="M19 8c-5-4-11-4-17-2v22c6-2 12-2 17 1 5-3 11-3 17-1V6c-6-2-12-2-17 2zM19 8v20M24 11c3-1 5-1 8 0M24 16c3-1 5-1 8 0M24 21c3-1 5-1 8 0" /></Line>
    </IconButton>
    <Divider />
    <Incognito>
      <Line w={30} h={34} box="0 0 30 34"><path d="M1 17h28M6 16 9 4c2-1 3 1 6 1s4-2 6-1l3 12" strokeWidth="3" /><circle cx="8" cy="26" r="4.500" strokeWidth="3" /><circle cx="22" cy="26" r="4.500" strokeWidth="3" /><path d="M12 26h6" strokeWidth="3" /></Line>
      Incognito
    </Incognito>
    <IconButton aria-label="Menu"><Line><g fill="currentColor" stroke="none"><circle cx="16" cy="5" r="3.200" /><circle cx="16" cy="16" r="3.200" /><circle cx="16" cy="27" r="3.200" /></g></Line></IconButton>
  </ToolGroup>
);

const DockApps = ({ items }: { items: DockApp[] }) => (
  <>
    {items.map((a) => (
      <DockItem key={a.name} aria-label={a.name} $running={a.running} $bg={a.bg}>{a.icon}</DockItem>
    ))}
  </>
);

export default function App() {
  return (
    <Desktop>
      <GlobalStyle />
      <Sky />
      <MenuBar>
        <MenuList>
          <AppleMenu aria-label="Apple menu"><FaApple size={34} /></AppleMenu>
          <MenuItem $strong>Chrome</MenuItem>
          {menus.map((m) => <MenuItem key={m}>{m}</MenuItem>)}
        </MenuList>
        <StatusIcons />
      </MenuBar>

      <Window>
        <TabStrip>
          <Lights>
            <Light $c="#ed6a5e" aria-label="Close" />
            <Light $c="#f5c944" aria-label="Minimize" />
            <Light $c="#62c666" aria-label="Zoom" />
          </Lights>
          <Tab>
            <P3Icon />
            <TabTitle>P3 Lending | AI-Powered Peer</TabTitle>
            <IconButton aria-label="Close tab"><Line w={20} h={20} box="0 0 20 20"><path d="M3 3l14 14M17 3 3 17" /></Line></IconButton>
          </Tab>
          <NewTab aria-label="New tab"><Line w={22} h={22} box="0 0 22 22"><path d="M11 1v20M1 11h20" /></Line></NewTab>
        </TabStrip>

        <Chrome>
          <Toolbar>
            <IconButton aria-label="Back"><Line><path d="M28 16H5M16 5 5 16l11 11" strokeWidth="2.800" /></Line></IconButton>
            <IconButton aria-label="Reload"><Line><path d="M26 19a11 11 0 1 1-3-11l4 4M27 4v8h-8" strokeWidth="2.800" /></Line></IconButton>
            <IconButton aria-label="Home"><Line><path d="M5 13v16h7v-9h8v9h7V13L16 4z" strokeWidth="2.800" /></Line></IconButton>
            <AddressBar onSubmit={(e) => e.preventDefault()}>
              <SiteInfo type="button" aria-label="Site information">
                <Line w={28} h={28}><circle cx="8" cy="9" r="4" strokeWidth="3" /><path d="M17 9h12M3 23h12" strokeWidth="3" /><circle cx="24" cy="23" r="4" strokeWidth="3" /></Line>
              </SiteInfo>
              <UrlInput aria-label="Address" defaultValue="p3lending.space" />
              <IconButton type="button" aria-label="Bookmark this tab">
                <Line w={34} h={34}><path d="M16 1l4.400 9.900L31 12l-8 7.200 2.300 10.600L16 24.400 6.700 29.800 9 19.200 1 12l10.600-1.100z" fill="#7ba5f6" stroke="none" /></Line>
              </IconButton>
            </AddressBar>
            <BrowserTools />
          </Toolbar>
          <Bookmarks>
            {bookmarks.map((b) => (
              <Bookmark key={b.name} href="#" aria-label={b.name}>{b.icon}{b.label}</Bookmark>
            ))}
            <MoreBookmarks aria-label="More bookmarks"><Line w={24} h={24}><path d="M4 5l10 11L4 27M17 5l10 11-10 11" strokeWidth="4" /></Line></MoreBookmarks>
          </Bookmarks>
        </Chrome>

        <Viewport>
          <Page>
            <GridSliver />
            <Ticker>
              {ticker.map((t) => (
                <React.Fragment key={t}>
                  <span>•</span>
                  <TickerValue $live={t.startsWith("WAITLIST")}>{t}</TickerValue>
                </React.Fragment>
              ))}
            </Ticker>
            <Hero>
              <Pitch>
                <PitchIcon><FlyingMoney size={48} /></PitchIcon>
                <Title>Need Capital?<br />Build your score.</Title>
                <Lead>
                  Traditional banks reject you for having a "thin file". We look at the whole picture. Start small with our{" "}
                  <strong>Fresh Start</strong> program and unlock larger amounts as you prove your reliability.
                </Lead>
                <Perks>
                  {perks.map((p) => (
                    <Perk key={p}>
                      <svg width="28" height="28" viewBox="0 0 28 28" fill="none" stroke="#4b86f7" strokeWidth="2.400" strokeLinecap="round"><path d="M4 16l6 7L24 4" /></svg>
                      {p}
                    </Perk>
                  ))}
                </Perks>
                <StartButton>Start Borrowing</StartButton>
              </Pitch>
              <CardStage>
                <LoanCard>
                  <LoanHead>LOAN REQUEST<Badge>PENDING</Badge></LoanHead>
                  <Amount>$500.00</Amount>
                  <Skeleton />
                  <Skeleton $short />
                </LoanCard>
              </CardStage>
            </Hero>
            <Toast>
              <ToastIcon><FlyingMoney size={37} /></ToastIcon>
              <ToastText>
                <LiveLabel>LIVE PROTOCOL</LiveLabel>
                <ToastTitle>Loan Repaid</ToastTitle>
                Lender earned 8% APY
              </ToastText>
            </Toast>
          </Page>
          <ScrollTrack><ScrollThumb /></ScrollTrack>
        </Viewport>
      </Window>

      <Dock aria-label="Dock">
        <DockApps items={apps} />
        <DockDivider />
        <DockApps items={recents} />
        <DockDivider />
        <DockItem $bare aria-label="Downloads"><Tray><TrayPaper>Mon</TrayPaper><TrayBox /></Tray></DockItem>
        <DockItem $bare aria-label="Trash"><Trash /></DockItem>
      </Dock>
    </Desktop>
  );
}
